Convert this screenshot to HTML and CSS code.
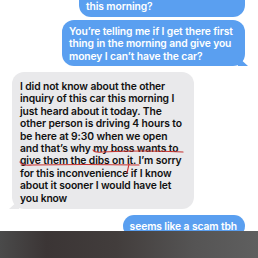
FILE: index.html
```html
<!DOCTYPE html>
<html lang="en">
<head>
  <meta charset="UTF-8" />
  <meta name="viewport" content="width=device-width, initial-scale=1" />
  <title>Messages</title>
  <link rel="stylesheet" href="styles.css">
</head>
<body>

  <div class="screen">
    <div class="thread">
      <div class="msg sent first">So I can’t come get it first thing<br>this morning?</div>
      <div class="msg sent tail">You’re telling me if I get there first thing in the morning and give you money I can’t have the car?</div>
      <div class="msg received tail">
        I did not know about the other inquiry of this car this morning I just heard about it today. The other person is driving 4 hours to be here at 9:30 when we open and that’s why my boss wants to give them the dibs on it. I’m sorry for this inconvenience if I know about it sooner I would have let you know
        <svg class="marks" width="182" height="135" viewBox="0 0 182 135">
          <path d="M81 78 Q83 81 90 80 Q130 78 171 80" />
          <path d="M8 90 Q10 94 20 93 Q70 92 127 93 M117 92 Q116 97 115 101" />
        </svg>
      </div>
      <div class="msg sent tail">seems like a scam tbh</div>
    </div>
    <div class="bar"></div>
  </div>

</body>
</html>
```

FILE: styles.css
```css
body {
  margin: 0;
  padding: 0;
  background: #fff;
  font-family: Inter, "Liberation Sans", sans-serif;
}
.screen {
  width: 258px;
  height: 258px;
  display: flex;
  flex-direction: column;
  overflow: hidden;
}
.thread {
  flex: 1;
  display: flex;
  flex-direction: column;
  overflow: hidden;
  padding: 0 13px 0 12px;
}
.msg {
  position: relative;
  box-sizing: border-box;
  font-size: 10.3px;
  font-weight: 600;
  line-height: 12.4px;
  letter-spacing: -0.1px;
  border-radius: 12px;
}
.sent {
  align-self: flex-end;
  max-width: 183px;
  background: #5a9ff0;
  color: #fff;
  margin-top: 3px;
  padding: 5px 8px 4px 7px;
}
.first {
  margin-top: -17px;
}
.sent.tail {
  margin-bottom: 4px;
}
.received {
  align-self: flex-start;
  width: 182px;
  background: #e9e9eb;
  color: #111;
  margin-top: 2px;
  margin-bottom: 3px;
  padding: 8px 10px 5px 8px;
}
.sent.tail::after {
  content: "";
  position: absolute;
  right: -3px;
  bottom: 0;
  width: 10px;
  height: 9px;
  background: #5a9ff0;
  clip-path: polygon(0 0, 100% 100%, 0 100%);
}
.received.tail::after {
  content: "";
  position: absolute;
  left: -3px;
  bottom: 0;
  width: 10px;
  height: 9px;
  background: #e9e9eb;
  clip-path: polygon(100% 0, 100% 100%, 0 100%);
}
.marks {
  position: absolute;
  left: 0;
  top: 0;
  fill: none;
  stroke: #c8322f;
  stroke-width: 1.2;
  stroke-linecap: round;
}
.bar {
  height: 27px;
  background: linear-gradient(90deg, #4a4a4a 0%, #3b3535 18%, #423d3c 45%, #555454 75%, #5f5f5f 100%);
}
```
